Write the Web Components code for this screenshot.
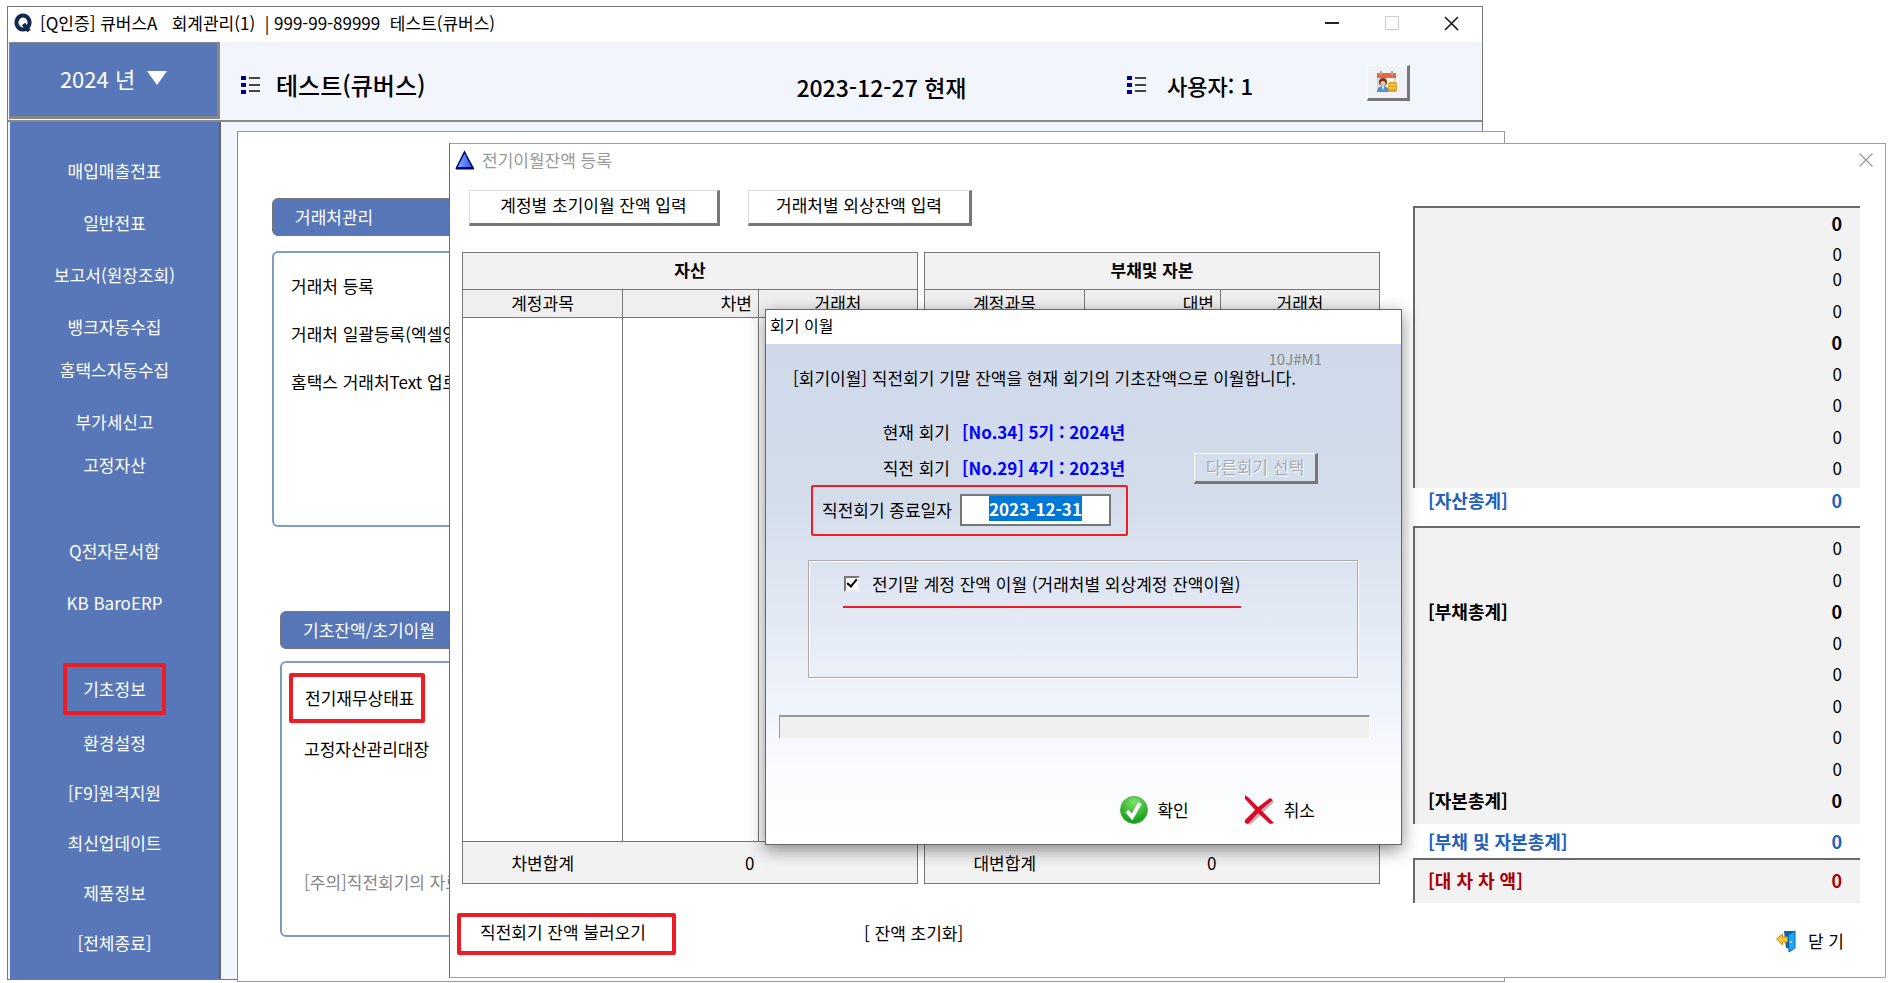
<!DOCTYPE html>
<html lang="ko">
<head>
<meta charset="utf-8">
<title>회계관리</title>
<style>
html,body{margin:0;background:#fff}
body{font-family:"Noto Sans CJK KR",sans-serif;font-size:17px;line-height:24px;color:#000}
.desktop{position:relative;min-height:983px;overflow:hidden}
.desktop>*{position:absolute}
#main{left:7px;top:6px;width:78%}
#work{left:237px;top:131px;width:67%}
#opening{left:449px;right:6px;top:143px}
#carry{left:765px;top:309px;width:637px}
</style>
</head>
<body>
<div class="desktop">
  <main-window id="main"></main-window>
  <work-area id="work">
    <info-panel heading="거래처관리">
      <a href="#c1">거래처 등록</a>
      <a href="#c2">거래처 일괄등록(엑셀양식)</a>
      <a href="#c3">홈택스 거래처Text 업로드</a>
    </info-panel>
    <info-panel heading="기초잔액/초기이월" second>
      <a href="#b1" class="marked">전기재무상태표</a>
      <a href="#b2">고정자산관리대장</a>
      <p>[주의]직전회기의 자료</p>
    </info-panel>
  </work-area>
  <opening-window id="opening"></opening-window>
  <carry-dialog id="carry"></carry-dialog>
</div>
<script>
const define = (name, html, init) => customElements.define(name, class extends HTMLElement {
  constructor() {
    super();
    this.attachShadow({ mode: 'open' }).innerHTML =
      '<style>*,:host{box-sizing:border-box}button,input{font:inherit;color:inherit;margin:0}a{color:inherit;text-decoration:none}</style>' + html;
  }
  connectedCallback() { if (init) init(this, this.shadowRoot); }
});

define('list-icon', `<style>:host{display:block;width:20px;height:18px}svg{display:block}</style>
<svg width="20" height="18" viewBox="0 0 20 18"><path fill="#000090" d="M0 0h5v4H0zM0 7h5v4H0zM0 14h5v4H0z"/><path fill="#444" d="M8 1h11v2H8zM8 8h11v2H8zM8 14h11v2H8z"/></svg>`);

define('side-menu', `<style>
:host{display:block;background:#5877b8;color:#fff;border-right:2px solid #666}
nav{display:flex;flex-direction:column;align-items:center;padding:37px 0 24px}
a{display:block;margin-top:28px}
a:first-child{margin-top:0}
.near{margin-top:19px}
.group{margin-top:62px}
.sys{margin-top:26px}
.marked{border:4px solid #ee1c24;border-radius:2px;padding:10px 16px;margin:48px 0 16px}
.marked+a{margin-top:0}
</style>
<nav>
<a href="#1">매입매출전표</a><a href="#2">일반전표</a><a href="#3">보고서(원장조회)</a><a href="#4">뱅크자동수집</a>
<a href="#5" class="near">홈택스자동수집</a><a href="#6">부가세신고</a><a href="#7" class="near">고정자산</a>
<a href="#8" class="group">Q전자문서함</a><a href="#9">KB BaroERP</a>
<a href="#10" class="marked">기초정보</a><a href="#11">환경설정</a><a href="#12" class="sys">[F9]원격지원</a>
<a href="#13" class="sys">최신업데이트</a><a href="#14" class="sys">제품정보</a><a href="#15" class="sys">[전체종료]</a>
</nav>`);

define('main-window', `<style>
:host{display:block;border:1px solid #777;background:#f2f5fb}
.title{display:flex;align-items:center;height:35px;background:#fff;padding:0 23px 3px 6px;white-space:pre}
.title svg{flex:none}
.title span{margin-left:8px;flex:1}
.ctl{border:0;background:none;padding:0;width:60px;height:30px;display:flex;align-items:center;justify-content:flex-end}
header{display:flex;height:80px;border-bottom:2px solid #8a8a8a}
.year{flex:none;width:211px;height:77px;margin-left:1px;border:2px solid #888;border-width:1px 3px 3px 1px;background:#5877b8;color:#fff;font-size:22px;display:flex;align-items:center;justify-content:center;gap:12px;padding:0 0 3px}
.bar{flex:1;display:flex;align-items:center;padding:7px 72px 0 21px;font-size:24px;font-weight:500}
.bar>div{display:flex;align-items:center;gap:15px}
.t{flex:556 1 0}.d{flex:331 1 0;font-size:23px;padding-top:4px}.bar .u{flex:240 1 0;font-size:22px;gap:20px}
.cal{flex:none;width:43px;height:36px;margin-bottom:3px;padding:0;background:#f0f2f8;border:1px solid #fff;border-right:3px solid #777;border-bottom:3px solid #777;display:grid;place-items:center}
side-menu{width:211px;margin-left:2px}
</style>
<div class="title"><svg width="18" height="20" viewBox="0 0 18 20"><path d="M9 2.500a6.500 7 0 1 0 .01 0M9.500 11l5.500 7" fill="none" stroke="#10294f" stroke-width="4"/></svg><span>[Q인증] 큐버스A   회계관리(1)  | 999-99-89999  테스트(큐버스)</span>
<button class="ctl" aria-label="최소화"><svg width="14" height="14"><path d="M0 7h14" stroke="#222" stroke-width="2"/></svg></button>
<button class="ctl" aria-label="최대화"><svg width="14" height="14"><path d="M.5 .5h13v13H.5z" fill="none" stroke="#ccc"/></svg></button>
<button class="ctl" aria-label="닫기"><svg width="15" height="15"><path d="M1 1l13 13M14 1L1 14" stroke="#111" stroke-width="1.500"/></svg></button></div>
<header><button class="year"><span>2024 년</span><svg width="20" height="14"><path d="M0 0h20l-10 14z" fill="#fff"/></svg></button>
<div class="bar"><div class="t"><list-icon></list-icon><span>테스트(큐버스)</span></div><div class="d">2023-12-27 현재</div><div class="u"><list-icon></list-icon><span>사용자: 1</span></div>
<button class="cal" aria-label="일정"><svg width="22" height="22" viewBox="0 0 22 22"><path d="M2 3h17v16H2z" fill="#f7f2ec" stroke="#bbb"/><path d="M1 2h19v5H1z" fill="#e8663a"/><path d="M5 0v4M16 0v4" stroke="#aaa" stroke-width="2"/><circle cx="7" cy="11" r="4" fill="#6b3a24"/><circle cx="7" cy="12.500" r="2.500" fill="#f6c39b"/><path d="M1 21c0-8 12-8 12 0z" fill="#4b8fd8"/><path d="M6 15h2l-1 5z" fill="#fff"/><rect x="12" y="11" width="9" height="10" rx="2" fill="#e3a51c"/><path d="M13 14h7M13 17h7" stroke="#fbe08a"/></svg></button></div></header>
<side-menu></side-menu>`);

define('work-area', `<style>
:host{display:block;border:1px solid #999;border-left-color:#7f8ea8;background:#fff;padding:66px 34px 44px}
</style><slot></slot>`);

define('info-panel', `<style>
:host{display:block}
:host([second]){margin:84px 0 0 8px}
h2{margin:0;height:38px;padding:0 22px;font-size:17px;font-weight:400;line-height:36px;color:#fff;background:#5877b8;border:1px solid #777;border-radius:6px}
.box{margin-top:15px;height:276px;border:2px solid #7f9cc9;border-radius:6px;padding:21px 17px}
:host([second]) .box{margin-top:12px}
::slotted(*){display:table;margin:0 0 24px;color:#000;text-decoration:none;font-size:17px}
:host([second]) .box{padding:10px 22px}
::slotted(.marked){border:4px solid #ee1c24;border-radius:2px;padding:9px 7px 9px 12px;margin:0 0 14px -15px}
::slotted(p){color:#888;margin-top:109px}
</style><h2></h2><div class="box"><slot></slot></div>`, (el, r) => r.querySelector('h2').textContent = el.getAttribute('heading'));

define('balance-table', `<style>
:host{display:block;flex:none;width:456px}
table{width:456px;border-collapse:collapse;table-layout:fixed;border:1px solid #777;background:#fff}
th,td{padding:0 0 2px;border:1px solid #777;font-weight:400}
thead th,tfoot td{background:#f2f2f2}
.cap th{height:37px;font-weight:700}
.cols th{height:28px;background:#efefef}
.cols th:nth-child(2){text-align:right;padding-right:6px}
tbody td{height:524px}
tfoot td{height:42px;padding:0;text-align:center;border-left:0;border-right:0}
tfoot td:nth-child(2){text-align:right;padding-right:4px}
</style>
<table><colgroup><col style="width:160px"><col style="width:136px"><col></colgroup>
<thead><tr class="cap"><th colspan="3" id="cap"></th></tr><tr class="cols"><th>계정과목</th><th id="side"></th><th>거래처</th></tr></thead>
<tbody><tr><td></td><td></td><td></td></tr></tbody>
<tfoot><tr><td id="sum"></td><td>0</td><td></td></tr></tfoot></table>`, (el, r) => {
  r.getElementById('cap').textContent = el.getAttribute('caption');
  r.getElementById('side').textContent = el.getAttribute('side');
  r.getElementById('sum').textContent = el.getAttribute('side') + '합계';
});

define('sum-row', `<style>
:host{display:flex;padding:0 18px 0 13px}
:host([strong]){font-weight:700;font-size:18px}
:host([tone=blue]){color:#2060c0}
:host([tone=red]){color:#a80000}
span{margin-left:auto}
</style><slot></slot><span>0</span>`);

define('sum-box', `<style>
:host{display:grid;align-items:start;background:#f2f2f2;border-top:2px solid #6a6a6a;border-left:2px solid #6a6a6a}
</style><slot></slot>`);

define('opening-window', `<style>
:host{display:block;border:1px solid #a0a0a0;border-left-color:#5b6d94;background:#fff}
.title{display:flex;align-items:center;height:33px;padding:0 12px 2px 5px;color:#999;gap:7px}
.title span{flex:1}
.x{border:0;background:none;padding:0;display:flex}
.cols{display:flex;justify-content:space-between;align-items:flex-start;padding:0 25px 0 12px}
.tools{display:flex;gap:28px;padding:13px 0 26px 7px}
.tools button{height:36px;padding:0 0 4px;background:#fff;border:1px solid #ddd;border-right:3px solid #777;border-bottom:3px solid #777}
.tools button:first-child{width:251px}.tools button:last-child{width:224px}
.tables{display:flex;gap:6px}
.side{flex:none;width:447px;padding-top:29px}
.b1{height:282px;padding-top:3px;grid-template-rows:31px 25px repeat(7,1fr)}
.b2{height:298px;padding:8px 0 4px;grid-template-rows:repeat(9,1fr)}
.b3{height:45px;padding-top:8px}
.side>sum-row{padding:0 18px 14px 15px}
.side>sum-row.two{padding:5px 18px 5px 15px}
footer{display:flex;align-items:center;padding:0 41px 22px 7px}
.load{margin-top:10px;flex:none;width:219px;height:42px;background:#fff;border:4px solid #ee1c24;border-radius:2px;padding:0 0 4px 19px;text-align:left}
.reset{margin:8px auto 0 188px;border:0;background:none;padding:0}
.close{display:flex;align-items:center;gap:12px;border:0;background:none;padding:0;margin-top:24px}
</style>
<div class="title"><svg width="20" height="20" viewBox="0 0 20 20"><defs><linearGradient id="g"><stop offset="0" stop-color="#8ab4ff"/><stop offset="1" stop-color="#2a4fe0"/></linearGradient></defs><path d="M9.500 2L18 18H1.500z" fill="url(#g)" stroke="#00006a" stroke-width="1.500"/><path d="M1 18.500h18" stroke="#00006a" stroke-width="2"/></svg><span>전기이월잔액 등록</span>
<button class="x" aria-label="닫기"><svg width="14" height="14"><path d="M.5 .5l13 13M13.500 .5l-13 13" stroke="#999" stroke-width="1.200"/></svg></button></div>
<div class="cols"><div><div class="tools"><button>계정별 초기이월 잔액 입력</button><button>거래처별 외상잔액 입력</button></div>
<div class="tables"><balance-table caption="자산" side="차변"></balance-table><balance-table caption="부채및 자본" side="대변"></balance-table></div></div>
<div class="side">
<sum-box class="b1"><sum-row strong></sum-row><sum-row></sum-row><sum-row></sum-row><sum-row></sum-row><sum-row strong></sum-row><sum-row></sum-row><sum-row></sum-row><sum-row></sum-row><sum-row></sum-row></sum-box>
<sum-row strong tone="blue">[자산총계]</sum-row>
<sum-box class="b2"><sum-row></sum-row><sum-row></sum-row><sum-row strong>[부채총계]</sum-row><sum-row></sum-row><sum-row></sum-row><sum-row></sum-row><sum-row></sum-row><sum-row></sum-row><sum-row strong>[자본총계]</sum-row></sum-box>
<sum-row strong tone="blue" class="two">[부채 및 자본총계]</sum-row>
<sum-box class="b3"><sum-row strong tone="red">[대 차 차 액]</sum-row></sum-box>
</div></div>
<footer><button class="load">직전회기 잔액 불러오기</button><button class="reset">[ 잔액 초기화]</button>
<button class="close"><svg width="20" height="22" viewBox="0 0 20 22"><path d="M8 1h11v17h-9z" fill="#0b63b0"/><path d="M12 5l7-4v17l-6 4z" fill="#22a7f2" stroke="#0b63b0"/><circle cx="15" cy="12" r="1" fill="#ffd84a"/><path d="M.5 9l6-5v3h5v5h-5v3z" fill="#fbc832" stroke="#c48a14"/></svg><span>닫 기</span></button></footer>`);

define('carry-dialog', `<style>
:host{display:block;border:1px solid #666;background:#fff;box-shadow:0 5px 16px rgba(0,0,0,.45)}
.title{height:34px;padding:3px 4px;font-size:16px}
.body{background:linear-gradient(#cfd9ea,#d3dcea 30%,#eaeff8 65%,#fafbfe 85%,#fff);padding:7px 31px 19px 13px}
.code{display:block;width:fit-content;margin:0 48px 0 auto;color:#888;font-size:15px;line-height:16px}
.msg{margin:1px 0 26px 14px;white-space:nowrap;line-height:20px}
.row{display:flex;align-items:center;height:36px}
.row span{flex:none;width:171px;text-align:right}
b{margin-left:12px;color:#00f}
.other{margin-left:auto;margin-right:52px;width:124px;height:31px;padding:0;background:#d5deeb;color:#a8adb5;text-shadow:1px 1px #fff;border:1px solid #fff;border-right:3px solid #777;border-bottom:3px solid #777}
.date{display:flex;align-items:center;justify-content:space-between;width:317px;height:51px;margin:-1px 0 0 32px;padding:0 15px 2px 9px;border:2px solid #ee1c24;border-radius:2px}
input[type=text]{width:151px;height:32px;border:2px solid #777;background:#fff;padding:0 0 3px;text-align:center;font-weight:700;outline:0}
input::selection{background:#0078d7;color:#fff}
.group{height:118px;margin:24px 12px 37px 29px;border:1px solid #aaa;box-shadow:inset 1px 1px #fff,1px 1px #fff;padding:11px 34px}
.chk{display:flex;align-items:center;gap:12px;width:398px;height:36px;padding-bottom:11px;border-bottom:2px solid #ee1c24;white-space:nowrap}
input[type=checkbox]{appearance:none;flex:none;width:16px;height:16px;margin-left:1px;background:#fff;border:2px solid #777;border-right-color:#eee;border-bottom-color:#eee;display:grid;place-items:center}
input:checked::after{content:"";width:4px;height:8px;border:solid #000;border-width:0 2px 2px 0;rotate:40deg;margin-top:-3px}
.prog{height:24px;background:#efefef;border:1px solid #fff;border-top:2px solid #999;border-left-color:#999}
.act{display:flex;justify-content:flex-end;gap:56px;padding:56px 55px 0 0}
.act button{display:flex;align-items:center;gap:9px;border:0;background:none;padding:0}
</style>
<div class="title">회기 이월</div>
<div class="body"><span class="code">10J#M1</span>
<div class="msg">[회기이월] 직전회기 기말 잔액을 현재 회기의 기초잔액으로 이월합니다.</div>
<div class="row"><span>현재 회기</span><b>[No.34] 5기 : 2024년</b></div>
<div class="row"><span>직전 회기</span><b>[No.29] 4기 : 2023년</b><button class="other" disabled>다른회기 선택</button></div>
<div class="date"><label for="d">직전회기 종료일자</label><input id="d" type="text" value="2023-12-31"></div>
<div class="group"><div class="chk"><input id="c" type="checkbox" checked><label for="c">전기말 계정 잔액 이월 (거래처별 외상계정 잔액이월)</label></div></div>
<div class="prog"></div>
<div class="act"><button><svg width="28" height="30" viewBox="0 0 28 30"><defs><radialGradient id="k" cx=".5" cy=".2" r=".8"><stop offset="0" stop-color="#7be36a"/><stop offset="1" stop-color="#0a9a10"/></radialGradient></defs><circle cx="14" cy="15" r="13.500" fill="url(#k)" stroke="#5bb04f"/><path d="M7 16l5 6 8-14" fill="none" stroke="#fff" stroke-width="4"/></svg><span>확인</span></button>
<button><svg width="30" height="30" viewBox="0 0 30 30"><path d="M4 29L28 6" stroke="#777" stroke-width="3" opacity=".5"/><path d="M0 0l4 3 25 25-4 1L13 18 0 4z" fill="#dc0a28"/><path d="M25 3l3 2L15 16 3 29l-3-1v-3L12 13z" fill="#dc0a28"/></svg><span>취소</span></button></div>
</div>`, (el, r) => { const i = r.getElementById('d'); i.focus(); i.select(); });
</script>
</body>
</html>
